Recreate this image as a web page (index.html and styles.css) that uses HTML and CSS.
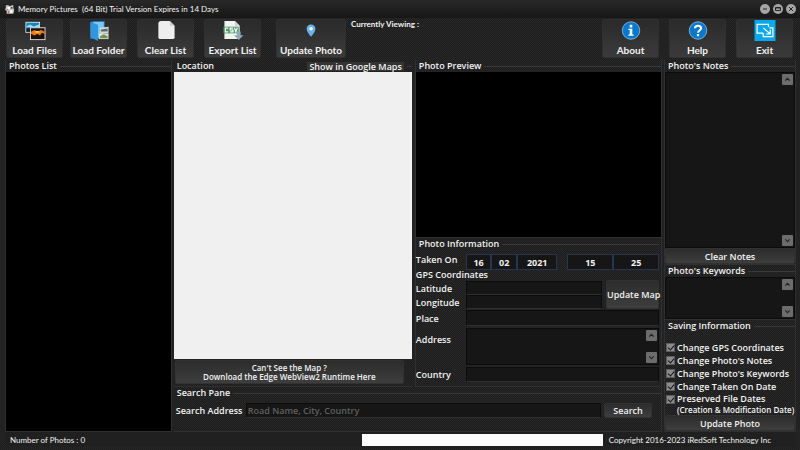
FILE: index.html
```html
<!DOCTYPE html>
<html lang="en">
<head>
    <meta charset="UTF-8">
    <meta name="viewport" content="width=device-width, initial-scale=1.0">
    <title>Memory Pictures</title>
    <link rel="stylesheet" href="styles.css">
</head>
<body>
    <header class="titlebar">
        <svg class="app-icon" viewBox="0 0 12 12"><path fill="#c9c5c2" d="M1 1h3l2 1 2-1h2v3l1 3-1 4H2V8L0 6l1-2z"/><path fill="#fff" d="M3 3h3v3H3zM6 7h3v3H6z"/><path fill="#5b4a45" d="M7 3h2v2H7zM2 6h2v1H2zM4 8h1v2H4z"/></svg>
        <h1>Memory Pictures&nbsp; (64 Bit) Trial Version Expires in 14 Days</h1>
        <div class="window-buttons">
            <button aria-label="Minimize"><svg viewBox="0 0 10 10"><path d="M3 5h4"/></svg></button>
            <button aria-label="Maximize"><svg viewBox="0 0 10 10"><path d="M2.5 3.5h5v3h-5zM2.5 4h5"/></svg></button>
            <button aria-label="Close"><svg viewBox="0 0 10 10"><path d="M3 3l4 4M7 3L3 7"/></svg></button>
        </div>
    </header>

    <nav class="toolbar">
        <div class="tools load-tools">
            <button class="tool">
                <svg viewBox="1 1 23 23"><path fill="#ddd" d="M2 3h16v12H2z"/><path fill="#1684bd" d="M3 4h14v10H3z"/><path fill="#9ce0f5" d="M3 8l4-2 4 2 6-2v3H3z"/><path fill="#123" d="M3 10h14v4H3z"/><path fill="#e8ded5" d="M7 9h17v14H7z"/><path fill="#18110e" d="M8 10h15v12H8z"/><path fill="#f47a16" d="M8 14l4-2 3 2 4-2 4 2v2l-3-1-2 3-3-2-3 2-4-2z"/><path fill="#ffc247" d="M13 13h4v2h-4z"/></svg>
                Load Files
            </button>
            <button class="tool">
                <svg viewBox="1 0 22 22"><path fill="#2679bd" d="M3 2l3-1h12v19H3z"/><path fill="#77c9f6" d="M6 2h11v17L6 18z"/><path fill="#3296dc" d="M3 2l8 3v17l-8-4z"/><path fill="#d4d8d4" d="M13 8l9-1v7h-9z"/><path fill="#546c78" d="M14 10l7-1v3h-7z"/><path fill="#e2e1ce" d="M12 14h10v6H12z"/><path fill="#759353" d="M13 17l4-2 4 2v2h-8z"/></svg>
                Load Folder
            </button>
        </div>
        <div class="tools">
            <button class="tool">
                <svg viewBox="1 1 22 22"><path fill="#eee" d="M7 2h9l5 5v12q0 2-2 2H6q-2 0-2-2V5q0-3 3-3z"/><path fill="#ccc" d="M16 2v5h5z"/></svg>
                Clear List
            </button>
            <button class="tool">
                <svg viewBox="2 1 22 22"><path fill="#f1f4f1" d="M4 2h11l5 5v14H4z"/><path fill="#c8d2ca" d="M15 2v5h5z"/><path fill="#4d9b68" d="M3 8h16v7H3z"/><path fill="none" stroke="#fff" stroke-width="1.2" d="M8 9.500H5v4h3M13 9.500h-3v2h3v2h-3M14.500 9l1.500 4.500L17.500 9"/><path fill="#91a9b2" d="M17 13h4v4h3l-5 5-5-5h3z"/></svg>
                Export List
            </button>
        </div>
        <button class="tool tool-wide">
            <svg viewBox="0 0 24 24"><path fill="#69b2eb" d="M12 5c-3 0-5 2-5 5 0 4 5 9 5 9s5-5 5-9c0-3-2-5-5-5z"/><circle cx="12" cy="10" r="2" fill="#fff"/></svg>
            Update Photo
        </button>
        <p class="viewing">Currently Viewing :</p>
        <div class="tools end-tools">
            <button class="tool">
                <svg viewBox="0 0 24 24"><circle cx="12" cy="12" r="10" fill="#0878ce" stroke="#8bb7d8"/><path fill="#fff" d="M10.500 5.500h3v3h-3zM9 10h4.500v6.500H15V18H9v-1.500h1.500v-5H9z"/></svg>
                About
            </button>
            <button class="tool">
                <svg viewBox="0 0 24 24"><circle cx="12" cy="12" r="10" fill="#0878ce" stroke="#8bb7d8"/><path fill="none" stroke="#fff" stroke-width="2.400" d="M8.500 9.500c0-4 7-4 7 0 0 2.500-3.500 2.500-3.500 5"/><path fill="#fff" d="M10.700 16h2.600v2.500h-2.600z"/></svg>
                Help
            </button>
            <button class="tool">
                <svg viewBox="0 0 24 24"><path fill="#08a8ed" d="M0 0h24v24H0z"/><path fill="none" stroke="#fff" stroke-width="1.400" d="M10 15H3V5h13v3M17 9h4v10H10v-4M10 9l8 7M18 11v5h-5"/></svg>
                Exit
            </button>
        </div>
    </nav>

    <main class="workspace">
        <section class="panel photos">
            <h2><span>Photos List</span></h2>
            <div class="screen"></div>
        </section>

        <div class="center">
            <div class="upper">
                <section class="panel location">
                    <h2><span>Location</span><button class="maps">Show in Google Maps</button></h2>
                    <div class="map"></div>
                    <div class="runtime">
                        <button class="btn">Can't See the Map ?<br>Download the Edge WebView2 Runtime Here</button>
                    </div>
                </section>

                <div class="details">
                    <section class="panel preview">
                        <h2><span>Photo Preview</span></h2>
                        <div class="screen"></div>
                    </section>
                    <section class="panel info">
                        <h2><span>Photo Information</span></h2>
                        <div class="row taken">
                            <label for="day">Taken On</label>
                            <div class="date">
                                <input id="day" class="short" value="16">
                                <input class="short" value="02" aria-label="Month">
                                <input class="year" value="2021" aria-label="Year">
                            </div>
                            <div class="date time">
                                <input value="15" aria-label="Hour">
                                <input value="25" aria-label="Minute">
                            </div>
                        </div>
                        <h3>GPS Coordinates</h3>
                        <div class="gps">
                            <div class="coords">
                                <div class="row"><label for="lat">Latitude</label><input id="lat"></div>
                                <div class="row"><label for="lng">Longitude</label><input id="lng"></div>
                            </div>
                            <button class="btn">Update Map</button>
                        </div>
                        <div class="row place"><label for="place">Place</label><input id="place"></div>
                        <div class="row address">
                            <label for="address">Address</label>
                            <div class="memo">
                                <textarea id="address"></textarea>
                                <div class="scroll">
                                    <button aria-label="Scroll up"><svg viewBox="0 0 10 10"><path d="M3 6l2-2 2 2"/></svg></button>
                                    <button aria-label="Scroll down"><svg viewBox="0 0 10 10"><path d="M3 4l2 2 2-2"/></svg></button>
                                </div>
                            </div>
                        </div>
                        <div class="row"><label for="country">Country</label><input id="country"></div>
                    </section>
                </div>
            </div>

            <section class="panel search">
                <h2><span>Search Pane</span></h2>
                <form class="search-row">
                    <label for="search">Search Address</label>
                    <input id="search" placeholder="Road Name, City, Country">
                    <button type="button" class="btn">Search</button>
                </form>
            </section>
        </div>

        <aside class="side">
            <section class="panel notes">
                <h2><span>Photo's Notes</span></h2>
                <div class="memo">
                    <textarea aria-label="Photo's Notes"></textarea>
                    <div class="scroll">
                        <button aria-label="Scroll up"><svg viewBox="0 0 10 10"><path d="M3 6l2-2 2 2"/></svg></button>
                        <button aria-label="Scroll down"><svg viewBox="0 0 10 10"><path d="M3 4l2 2 2-2"/></svg></button>
                    </div>
                </div>
                <button class="btn">Clear Notes</button>
            </section>
            <section class="panel keywords">
                <h2><span>Photo's Keywords</span></h2>
                <div class="memo">
                    <textarea aria-label="Photo's Keywords"></textarea>
                    <div class="scroll">
                        <button aria-label="Scroll up"><svg viewBox="0 0 10 10"><path d="M3 6l2-2 2 2"/></svg></button>
                        <button aria-label="Scroll down"><svg viewBox="0 0 10 10"><path d="M3 4l2 2 2-2"/></svg></button>
                    </div>
                </div>
            </section>
            <section class="panel saving">
                <h2><span>Saving Information</span></h2>
                <div class="checks">
                    <label><input type="checkbox" checked>Change GPS Coordinates</label>
                    <label><input type="checkbox" checked>Change Photo's Notes</label>
                    <label><input type="checkbox" checked>Change Photo's Keywords</label>
                    <label><input type="checkbox" checked>Change Taken On Date</label>
                    <label><input type="checkbox" checked><span class="preserved">Preserved File Dates<small>(Creation &amp; Modification Date)</small></span></label>
                </div>
                <button class="btn">Update Photo</button>
            </section>
        </aside>
    </main>

    <footer class="statusbar">
        <span class="count">Number of Photos : 0</span>
        <div class="progress"></div>
        <span class="copyright">Copyright 2016-2023 iRedSoft Technology Inc</span>
    </footer>
</body>
</html>
```

FILE: styles.css
```css
* {
    box-sizing: border-box;
}
body {
    margin: 0;
    height: 100vh;
    display: flex;
    flex-direction: column;
    padding: 0 4px 3px 5px;
    background: repeating-conic-gradient(#1e1e1e 0 25%, #272727 0 50%) 0 0 / 2px 2px;
    color: #f2f2f2;
    font-family: "Open Sans", "Noto Sans", sans-serif;
    font-weight: 600;
    font-size: 9px;
    line-height: 11px;
    overflow: hidden;
}
h1, h2, h3, p {
    margin: 0;
    font-size: inherit;
    font-weight: inherit;
}
button, input, textarea {
    font: inherit;
    color: inherit;
    margin: 0;
    padding: 0;
    border: 0;
    border-radius: 0;
    min-width: 0;
}

/* title bar */
.titlebar {
    display: flex;
    align-items: center;
    height: 18px;
    flex: none;
    margin: 0 -4px 0 -5px;
    padding: 0 4px 0 5px;
    background: linear-gradient(#282828, #171717);
}
.app-icon {
    width: 10px;
    height: 11px;
    margin-right: 3px;
}
.titlebar h1 {
    flex: 1;
    font: 400 8px/12px Lato, sans-serif;
}
.window-buttons {
    display: flex;
    gap: 3px;
}
.window-buttons button {
    width: 10px;
    height: 10px;
    border-radius: 50%;
    background: #a5a5a5;
}
.window-buttons svg, .scroll svg {
    display: block;
    width: 100%;
    fill: none;
    stroke: #222;
}

/* toolbar */
.toolbar {
    display: flex;
    gap: 10px;
    height: 42px;
    flex: none;
    padding: 1px 3px 0 1px;
}
.tools {
    display: flex;
    gap: 10px;
}
.load-tools {
    gap: 7px;
}
.end-tools {
    margin-left: auto;
}
.tool {
    width: 57px;
    height: 39px;
    flex: none;
    display: flex;
    flex-direction: column;
    align-items: center;
    font: 700 10px/14px Lato, sans-serif;
    white-space: nowrap;
    background: linear-gradient(#2a2a2a, #3b3b3b);
    border: 1px solid #303030;
    border-radius: 2px;
}
.tool svg {
    width: 22px;
    height: 22px;
    margin: 0 0 2px;
}
.tool-wide {
    width: 70px;
    margin-left: 5px;
}
.viewing {
    font: 700 8px/10px Lato, sans-serif;
    margin-left: -5px;
}

/* group boxes */
.workspace {
    flex: 1;
    display: flex;
    min-height: 0;
}
.panel {
    display: flex;
    flex-direction: column;
    border: 1px solid #303030;
    border-top: 0;
}
.panel h2 {
    display: flex;
    align-items: center;
    height: 12px;
    padding-left: 3px;
    line-height: 12px;
    flex: none;
}
.panel h2::after {
    content: "";
    height: 1px;
    flex: 1;
    background: #393939;
    margin-left: 3px;
}
.panel h2 .maps {
    margin-left: auto;
    height: 9px;
    line-height: 9px;
    padding: 0 2px;
    background: #343434;
}
.panel h2:has(.maps)::after {
    flex: none;
    width: 5px;
}
.screen {
    flex: 1;
    background: #000;
}
.photos {
    flex: 166;
    min-width: 0;
}
.center {
    flex: 492;
    display: flex;
    flex-direction: column;
    min-width: 0;
    padding: 0 2px;
}
.side {
    flex: 133;
    display: flex;
    flex-direction: column;
    min-width: 0;
}
.upper {
    flex: 1;
    display: flex;
    gap: 3px;
    min-height: 0;
}
.location {
    flex: 238;
    border-left: 0;
    border-right: 0;
    min-width: 0;
}
.map {
    flex: 1;
    background: #f0f0f0;
}
.runtime {
    height: 27px;
    padding: 1px 8px 2px 1px;
    display: flex;
}
.runtime .btn {
    flex: 1;
    height: 24px;
    font-size: 8px;
    line-height: 9px;
}
.btn {
    background: linear-gradient(#2c2c2c, #3e3e3e);
    border: 1px solid #323232;
    border-radius: 2px;
    height: 16px;
    white-space: nowrap;
}
.details {
    flex: 247;
    display: flex;
    flex-direction: column;
    min-width: 0;
}
.preview {
    flex: 1;
}

/* photo information */
.info {
    padding: 0 2px 2px 0;
}
.row {
    display: flex;
    align-items: center;
    margin-bottom: 2px;
}
.row label {
    width: 50px;
    flex: none;
}
input, textarea {
    background: #161616;
    border: 1px solid #0c0c0c;
    border-bottom-color: #303030;
}
.row input {
    flex: 1;
    height: 15px;
}
.taken {
    align-items: flex-start;
    margin: 4px 0 -1px;
}
.date {
    display: flex;
    flex: 91;
}
.date input {
    width: 0;
    height: 16px;
    text-align: center;
    font-weight: bold;
    border: 1px solid #263650;
}
.date .short {
    flex: 25;
}
.date .year {
    flex: 41;
}
.time {
    margin-left: 10px;
}
.gps {
    display: flex;
    gap: 4px;
    margin-bottom: 1px;
}
.coords {
    flex: 1;
    padding-top: 1px;
}
.coords .row {
    margin-bottom: 0;
}
.coords input {
    height: 14px;
}
.gps .btn {
    width: 53px;
    height: 29px;
}
.address {
    align-items: flex-start;
}
.address label {
    line-height: 24px;
}
.address .memo {
    height: 37px;
}
.place input {
    height: 16px;
}
.memo {
    flex: 1;
    display: flex;
    background: #161616;
    border: 1px solid #0c0c0c;
}
.memo textarea {
    flex: 1;
    width: 0;
    border: 0;
    resize: none;
}
.scroll {
    display: flex;
    flex-direction: column;
    justify-content: space-between;
    padding: 1px;
}
.scroll button {
    width: 11px;
    height: 11px;
    background: #6c6c6c;
    border-radius: 1px;
}

/* search pane */
.search {
    height: 45px;
    border-left: 0;
}
.search-row {
    display: flex;
    align-items: center;
    margin: 4px 9px 0 2px;
}
.search-row label {
    width: 70px;
}
.search-row input {
    flex: 1;
    height: 15px;
    margin-right: 3px;
    padding-left: 1px;
}
.search-row input::placeholder {
    color: #606060;
    opacity: 1;
}
.search-row .btn {
    width: 48px;
    height: 15px;
}

/* right column */
.notes {
    flex: 1;
}
.keywords .memo {
    height: 42px;
    flex: none;
}
.checks {
    padding: 9px 0 1px 1px;
}
.checks label {
    display: flex;
    align-items: flex-start;
    line-height: 13px;
    white-space: nowrap;
}
.checks .preserved {
    line-height: 12px;
}
.checks small {
    display: block;
    font-size: 8px;
    line-height: 9px;
}
.checks input {
    appearance: none;
    width: 9px;
    height: 9px;
    margin: 2px 2px 0 0;
    flex: none;
    background: #8b8b8b;
    border: 1px solid #5c5c5c;
}
.checks input:checked::after {
    content: "";
    display: block;
    width: 3px;
    height: 5px;
    margin-left: 2px;
    border: solid #161616;
    border-width: 0 1px 1px 0;
    transform: rotate(40deg);
}

/* status bar */
.statusbar {
    display: flex;
    align-items: center;
    height: 15px;
    flex: none;
    padding: 0 25px 0 5px;
    font: 400 8px/12px Lato, sans-serif;
    background: #202020;
}
.count {
    flex: 352;
}
.progress {
    flex: 241;
    height: 12px;
    background: #fff;
}
.copyright {
    flex: 168;
    text-align: right;
    white-space: nowrap;
}
```
